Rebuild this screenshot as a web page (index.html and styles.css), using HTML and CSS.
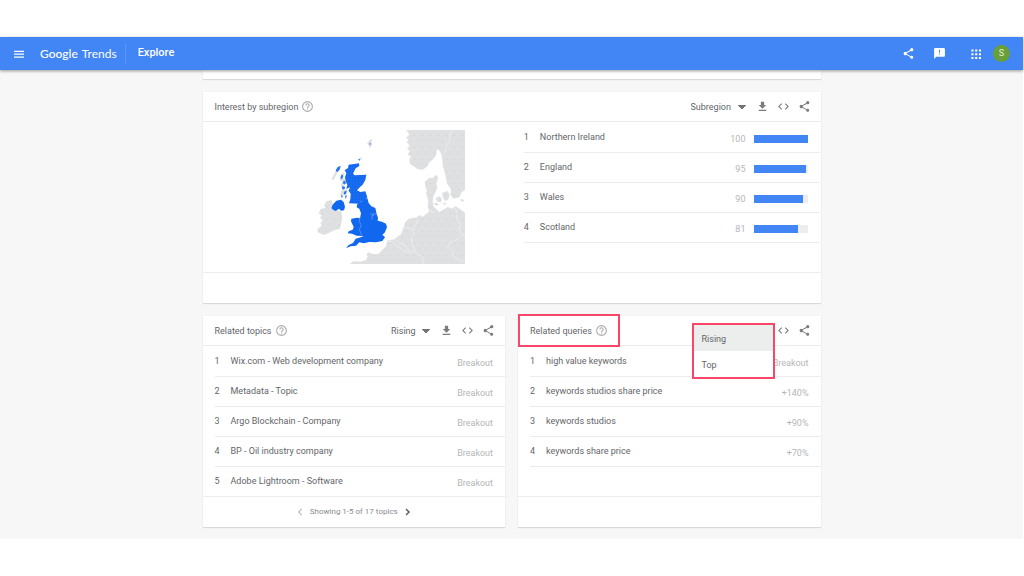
FILE: index.html
```html
<!DOCTYPE html>
<html lang="en">
<head>
<meta charset="utf-8">
<meta name="viewport" content="width=device-width, initial-scale=1">
<title>Google Trends - Explore</title>
<link rel="stylesheet" href="styles.css">
</head>
<body>
<svg class="symbols" aria-hidden="true">
  <symbol id="share" viewBox="0 0 24 24"><path d="M18 16.100c-.8 0-1.400.3-2 .8l-7.100-4.200c.1-.2.1-.5.1-.7s0-.5-.1-.7L16 7.200c.5.500 1.200.8 2 .8a3 3 0 1 0-3-3c0 .2 0 .5.1.7L8 9.800a3 3 0 1 0 0 4.400l7.100 4.100c0 .2-.1.400-.1.700a2.900 2.900 0 1 0 3-2.900z"/></symbol>
  <symbol id="download" viewBox="0 0 24 24"><path d="M19 9h-4V3H9v6H5l7 7 7-7zM5 18v2.500h14V18z"/></symbol>
  <symbol id="embed" viewBox="0 0 24 24"><path d="M9.400 16.600 4.800 12l4.600-4.600L8 6l-6 6 6 6zm5.200 0 4.600-4.600-4.600-4.600L16 6l6 6-6 6z"/></symbol>
  <symbol id="help" viewBox="0 0 24 24"><path d="M11 18h2v-2h-2zm1-16a10 10 0 1 0 0 20 10 10 0 0 0 0-20zm0 18a8 8 0 1 1 0-16 8 8 0 0 1 0 16zm0-14a4 4 0 0 0-4 4h2a2 2 0 1 1 4 0c0 2-3 1.750-3 5h2c0-2.250 3-2.500 3-5a4 4 0 0 0-4-4z"/></symbol>
</svg>

<div class="app">
  <header class="topbar">
    <button class="icon-btn" type="button" aria-label="Main menu"><svg viewBox="0 0 24 24"><path d="M0 4h24v3H0zM0 11h24v3H0zM0 18h24v3H0z"/></svg></button>
    <a class="logo" href="#"><span class="logo-google">Google</span> <span>Trends</span></a>
    <a class="section" href="#">Explore</a>
    <div class="topbar-actions">
      <button class="icon-btn" type="button" aria-label="Share"><svg class="icon-l"><use href="#share"/></svg></button>
      <button class="icon-btn" type="button" aria-label="Send feedback"><svg class="icon-l" viewBox="0 0 24 24"><path fill-rule="evenodd" d="M20 2H4a2 2 0 0 0-2 2v18l4-4h14a2 2 0 0 0 2-2V4a2 2 0 0 0-2-2zm-7 12h-2v-2h2zm0-4h-2V5h2z"/></svg></button>
      <button class="icon-btn apps" type="button" aria-label="Google apps"><svg viewBox="0 0 24 24"><path d="M1 1h5v5H1zM10 1h5v5h-5zM19 1h5v5h-5zM1 10h5v5H1zM10 10h5v5h-5zM19 10h5v5h-5zM1 19h5v5H1zM10 19h5v5h-5zM19 19h5v5h-5z"/></svg></button>
      <button class="avatar" type="button" aria-label="Account">S</button>
    </div>
  </header>

  <main class="content">
    <section class="card card-tail"></section>

    <section class="card">
      <div class="card-head">
        <h2>Interest by subregion</h2>
        <button class="icon-btn help" type="button" aria-label="Help: interest by subregion"><svg class="icon-l"><use href="#help"/></svg></button>
        <div class="tools">
          <select class="picker" aria-label="Resolution"><option>Subregion</option></select>
          <button class="icon-btn" type="button" aria-label="Download"><svg class="icon-m"><use href="#download"/></svg></button>
          <button class="icon-btn" type="button" aria-label="Embed"><svg class="icon-m"><use href="#embed"/></svg></button>
          <button class="icon-btn" type="button" aria-label="Share"><svg class="icon-m"><use href="#share"/></svg></button>
        </div>
      </div>
      <div class="region-body">
        <div class="map-pane">
          <svg class="map" viewBox="50 30 444 402" role="img" aria-label="Map of the United Kingdom">
            <defs>
              <pattern id="grain" width="24" height="36" patternUnits="userSpaceOnUse"><rect width="24" height="36" fill="#dfe0e2"/><path d="M5 8h3v3H5zM17 26h3v3h-3z" fill="#c9cbce"/></pattern>
              <pattern id="speckle" width="9" height="9" patternUnits="userSpaceOnUse"><rect width="9" height="9" fill="#1267ef"/><path d="M1 2h2v2H1zM6 6h2v2H6z" fill="#4c90fb"/></pattern>
            </defs>
            <g fill="url(#grain)">
              <path d="M318 30H494V210L484 217 477 232 459 236 450 224 452 208 440 190 434 160 427 136 425 111 418 92 410 88 407 105 400 116 388 127 379 141 366 150 351 147 340 139 329 132 327 119 332 109 322 104 329 93 320 86 328 77 319 67 325 59 317 53 327 44z"/>
              <path d="M373 185 380 181 386 173 399 174 405 165 411 167 413 177 408 190 411 203 406 216 398 231 397 244 400 260 409 268 416 276 428 269 443 261 456 266 466 259 480 268 494 278V432H148L159 424 182 425 196 421 202 411 199 401 204 397 219 403 234 402 246 389 257 379 260 362 282 357 302 342 311 319 315 306 325 296 350 292 359 285 366 291 382 279 387 272 382 260 384 242 377 220 380 211 375 200z"/>
              <path d="M406 233 419 229 425 239 421 247 411 245zM425 219 442 213 448 226 443 240 434 243 427 231zM399 250 409 248 416 254 408 257zM427 248 440 249 432 255zM481 237 491 239 490 245 481 243z"/>
              <path d="M93 240 78 244 72 256 76 263 61 267 55 280 64 286 59 294 67 301 60 312 66 316 51 328 53 337 69 345 84 340 102 331 119 326 123 308 126 290 122 274 104 269 92 263 98 252z"/>
              <path d="M208 60 216 56 213 65 216 73 208 85 205 75 200 72zM174 121 183 111 186 116 177 124zM106 153 115 139 123 137 115 151 108 164 99 181 94 178zM127 157 133 161 128 173 136 180 128 191 136 201 125 204 121 195 127 185 117 179zM124 211 138 206 130 221 119 226z"/>
            </g>
            <g fill="none" stroke="#f3f3f4" stroke-width="2">
              <path d="M457 31 448 45 450 63 438 75 437 92 427 105 419 95"/>
              <path d="M388 272 405 278M345 295 352 306 340 323 342 341 332 352 337 374 345 397 366 410 371 420 367 432M304 325 323 323 338 332M282 357 294 369 312 374 320 386 342 397M258 362 276 365 289 379 304 386 315 394 333 399M464 264 472 281 468 293 478 307 476 323 484 341 494 348M484 344 468 360 449 367 442 381 455 391 458 406 476 422 493 424"/>
            </g>
            <path fill="url(#speckle)" d="M145 134 176 130 177 138 166 145 158 161 163 166 198 164 195 180 188 193 177 203 170 211 180 216 195 214 201 232 194 241 181 245 176 251 146 250 150 238 151 221 145 212 149 202 138 207 141 195 136 184 134 172 138 160 133 151 143 144z"/>
            <path fill="#1267ef" d="M181 246 191 240 201 234 205 249 213 259 225 264 229 282 233 293 232 302 245 305 257 311 260 322 253 338 246 344 254 352 246 363 227 367 207 366 190 370 177 367 167 377 151 379 137 385 145 375 158 369 166 356 181 352 190 348 169 347 155 341 142 340 145 334 157 329 160 321 152 304 153 296 170 293 179 295 182 280 177 266 169 262 171 251z"/>
            <path fill="#1267ef" d="M93 264 97 254 108 242 122 239 130 246 134 260 131 271 122 272 116 266 106 273 98 269z"/>
            <path fill="#2b77f3" d="M112 141 121 138 118 149 110 157 106 151zM124 163 129 168 125 178 120 174zM131 181 137 187 134 194 127 190zM126 198 135 202 131 209 125 206zM131 215 140 211 137 222 130 225zM122 223 128 229 124 235zM134 228 140 225 136 238zM173 118 179 116 178 122zM207 70 211 70 209 77z"/>
            <path fill="none" stroke="#6aa2f9" stroke-width="2" d="M179 292 177 305 183 315 177 329 184 345M210 281 216 286 215 299M216 286 224 281 229 284M219 288 217 278"/>
          </svg>
        </div>
        <ol class="rows">
          <li><span class="rank">1</span><a href="#">Northern Ireland</a><span class="value">100</span><span class="bar"><span style="width:100%"></span></span></li>
          <li><span class="rank">2</span><a href="#">England</a><span class="value">95</span><span class="bar"><span style="width:95%"></span></span></li>
          <li><span class="rank">3</span><a href="#">Wales</a><span class="value">90</span><span class="bar"><span style="width:90%"></span></span></li>
          <li><span class="rank">4</span><a href="#">Scotland</a><span class="value">81</span><span class="bar"><span style="width:81%"></span></span></li>
        </ol>
      </div>
      <div class="card-foot"></div>
    </section>

    <div class="pair">
      <section class="card">
        <div class="card-head">
          <h2>Related topics</h2>
          <button class="icon-btn help" type="button" aria-label="Help: related topics"><svg class="icon-l"><use href="#help"/></svg></button>
          <div class="tools">
            <select class="picker" aria-label="Sort topics"><option>Rising</option><option>Top</option></select>
            <button class="icon-btn" type="button" aria-label="Download"><svg class="icon-m"><use href="#download"/></svg></button>
            <button class="icon-btn" type="button" aria-label="Embed"><svg class="icon-m"><use href="#embed"/></svg></button>
            <button class="icon-btn" type="button" aria-label="Share"><svg class="icon-m"><use href="#share"/></svg></button>
          </div>
        </div>
        <ol class="rows related">
          <li><span class="rank">1</span><a href="#">Wix.com - Web development company</a><span class="value">Breakout</span></li>
          <li><span class="rank">2</span><a href="#">Metadata - Topic</a><span class="value">Breakout</span></li>
          <li><span class="rank">3</span><a href="#">Argo Blockchain - Company</a><span class="value">Breakout</span></li>
          <li><span class="rank">4</span><a href="#">BP - Oil industry company</a><span class="value">Breakout</span></li>
          <li><span class="rank">5</span><a href="#">Adobe Lightroom - Software</a><span class="value">Breakout</span></li>
        </ol>
        <div class="card-foot">
          <button class="icon-btn" type="button" aria-label="Previous" disabled><svg viewBox="0 0 24 24"><path d="M17 5.400 15.200 3.500 7 12l8.200 8.500L17 18.600 10.600 12z"/></svg></button>
          <span>Showing 1-5 of 17 topics</span>
          <button class="icon-btn next" type="button" aria-label="Next"><svg viewBox="0 0 24 24"><path d="M6 6 8.500 3.500 17 12 8.500 20.500 6 18 12 12z"/></svg></button>
        </div>
      </section>

      <section class="card">
        <div class="card-head">
          <div class="highlight">
            <h2>Related queries</h2>
            <button class="icon-btn help" type="button" aria-label="Help: related queries"><svg class="icon-l"><use href="#help"/></svg></button>
          </div>
          <div class="tools">
            <div class="menu-anchor">
              <button class="icon-btn" type="button" aria-label="Download"><svg class="icon-m"><use href="#download"/></svg></button>
              <div class="menu" role="menu" aria-label="Sort queries">
                <button type="button" role="menuitem" class="selected">Rising</button>
                <button type="button" role="menuitem">Top</button>
              </div>
            </div>
            <button class="icon-btn" type="button" aria-label="Embed"><svg class="icon-m"><use href="#embed"/></svg></button>
            <button class="icon-btn" type="button" aria-label="Share"><svg class="icon-m"><use href="#share"/></svg></button>
          </div>
        </div>
        <ol class="rows related">
          <li><span class="rank">1</span><a href="#">high value keywords</a><span class="value">Breakout</span></li>
          <li><span class="rank">2</span><a href="#">keywords studios share price</a><span class="value">+140%</span></li>
          <li><span class="rank">3</span><a href="#">keywords studios</a><span class="value">+90%</span></li>
          <li><span class="rank">4</span><a href="#">keywords share price</a><span class="value">+70%</span></li>
        </ol>
        <div class="card-foot"></div>
      </section>
    </div>
  </main>
</div>
</body>
</html>
```

FILE: styles.css
```css
* { box-sizing: border-box; }

body {
  margin: 0;
  padding: 37px 0;
  background: #fff;
  color: #646569;
  font: 9px/12px Roboto, "Liberation Sans", sans-serif;
}

a { color: inherit; text-decoration: none; }
button, select { font: inherit; color: inherit; }
h2 { margin: 0; font-size: 9px; line-height: 12px; font-weight: 400; }

.symbols { position: absolute; width: 0; height: 0; }

.app { margin-right: 1px; background: #f7f7f7; }

/* Top bar */
.topbar {
  position: relative;
  z-index: 1;
  display: flex;
  align-items: center;
  height: 33px;
  padding: 0 13px 0 14px;
  background: #4285f4;
  box-shadow: 0 1px 3px rgba(0, 0, 0, .4);
  color: #fff;
}

.logo {
  display: flex;
  gap: 4px;
  margin-left: 16px;
  font: 12px/16px Lato, sans-serif;
}
.logo-google { font-weight: 500; }

.section {
  margin-left: 8px;
  padding: 3px 0 5px 12px;
  border-left: 1px solid #5b97f8;
  font-size: 11px;
  font-weight: 500;
}

.topbar-actions { display: flex; align-items: center; gap: 18px; margin-left: auto; }
.apps { margin: 0 -6px 0 7px; }

.avatar {
  width: 17px;
  height: 17px;
  padding: 0;
  border: 0;
  border-radius: 50%;
  background: #689f38;
  color: #e4edda;
  line-height: 17px;
}

.icon-btn {
  display: flex;
  padding: 0;
  border: 0;
  background: none;
  color: inherit;
}
.icon-btn svg { width: 10px; height: 10px; fill: currentColor; }
.icon-btn .icon-m,
.icon-btn .icon-l { width: 13px; height: 13px; }

/* Cards */
.content {
  display: flex;
  flex-direction: column;
  gap: 13px;
  max-width: 618px;
  margin: 0 auto;
  padding-bottom: 12px;
}

.card { background: #fff; box-shadow: 0 1px 1px #d8d9da, 0 0 1px #e4e4e4; }
.card-tail { height: 9px; }

.card-head {
  display: flex;
  align-items: center;
  height: 30px;
  padding: 0 10px 0 12px;
  border-bottom: 1px solid #ececec;
}

.help { margin-left: 3px; color: #a9aaac; }

.tools { display: flex; align-items: center; gap: 8px; margin-left: auto; }
.tools .icon-btn { color: #7d7b7f; }

.picker {
  appearance: none;
  margin-right: 2px;
  padding: 0 14px 0 0;
  border: 0;
  background-color: transparent;
  background-image: linear-gradient(to bottom left, #757575 50%, transparent 51%),
                    linear-gradient(to bottom right, #757575 50%, transparent 51%);
  background-position: right 4px center, right 0 center;
  background-size: 4px 4px;
  background-repeat: no-repeat;
}

.card-foot {
  display: flex;
  align-items: center;
  justify-content: center;
  gap: 5px;
  height: 31px;
  border-top: 1px solid #ececec;
  color: #8b8c8f;
  font-size: 8px;
}
.card-foot .icon-btn { color: #b8b8b8; }
.card-foot .next { color: #616161; }

/* Map and region list */
.region-body { display: grid; grid-template-columns: 52fr 48fr; min-height: 150px; }
.map-pane { display: flex; justify-content: flex-end; align-items: center; padding-right: 59px; }
.map { width: 148px; height: 134px; }

.rows { margin: 0; padding: 1px 0 0; list-style: none; }
.rows li {
  display: flex;
  align-items: center;
  height: 30px;
  padding: 0 12px 2px 0;
  border-bottom: 1px solid #ececec;
}
.rank { width: 16px; }
.value { margin-left: auto; padding-top: 4px; color: #b5b6b8; }
.bar { width: 54px; height: 8px; margin: 4px 0 0 9px; background: #ededed; }
.bar span { display: block; height: 8px; background: #4285f4; }

/* Related topics and queries */
.pair { display: grid; grid-template-columns: 1fr 1fr; gap: 13px; }
.related { height: 150px; margin-left: 12px; }
.related li:nth-child(5) { height: 29px; padding-bottom: 1px; border-bottom: 0; }

.highlight {
  display: flex;
  align-items: center;
  height: 33px;
  margin-left: -12px;
  padding: 0 10px;
  border: 2px solid #f9476a;
}

.menu-anchor { position: relative; }
.menu {
  position: absolute;
  top: -1px;
  right: -6px;
  width: 83px;
  border: 2px solid #f9476a;
  background: #fff;
}
.menu button {
  display: block;
  width: 100%;
  height: 26px;
  padding: 2px 8px 0;
  border: 0;
  background: #fff;
  text-align: left;
}
.menu .selected { background: #eceeed; }
```
